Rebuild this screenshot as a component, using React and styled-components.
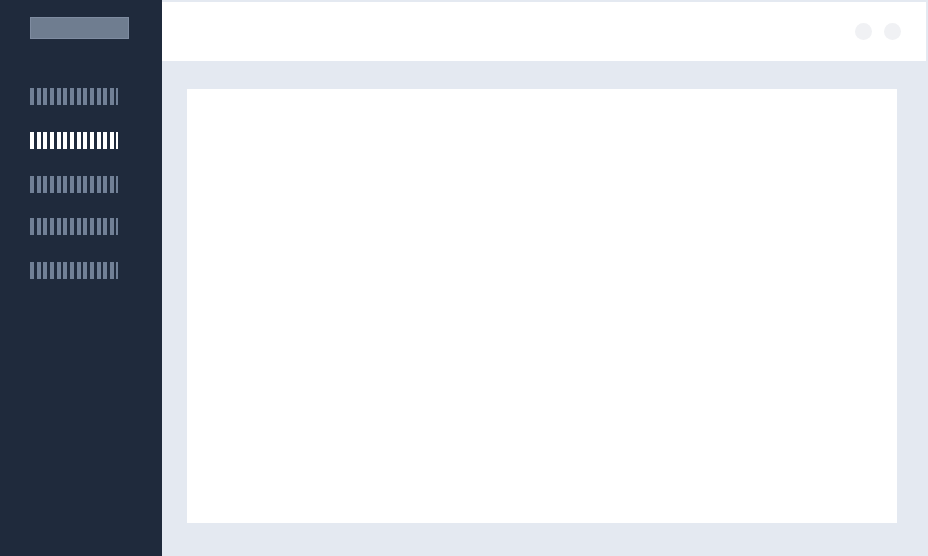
import React from 'react';
import styled, { createGlobalStyle } from 'styled-components';

const GlobalStyle = createGlobalStyle`
  html, body {
    margin: 0;
    padding: 0;
    width: 928px;
    height: 556px;
    overflow: hidden;
    font-family: "Liberation Sans", Arial, sans-serif;
  }
`;

const navItems = [
  { id: 'dashboard', active: false },
  { id: 'projects', active: true },
  { id: 'team', active: false },
  { id: 'reports', active: false },
  { id: 'settings', active: false },
];

const App = () => {
  return (
    <>
      <GlobalStyle />
      <Layout>
        <Sidebar>
          <Logo />
          <Nav>
            {navItems.map((item) => (
              <NavItem key={item.id} $active={item.active} aria-label={item.id} />
            ))}
          </Nav>
        </Sidebar>
        <Main>
          <Header>
            <Avatar />
            <Avatar />
          </Header>
          <Body>
            <Card />
          </Body>
        </Main>
      </Layout>
    </>
  );
};

const Layout = styled.div`
  display: flex;
  width: 928px;
  height: 556px;
`;

const Sidebar = styled.aside`
  width: 162px;
  flex-shrink: 0;
  background-color: #1f2a3c;
  padding: 17px 0 0 30px;
  box-sizing: border-box;
`;

const Logo = styled.div`
  width: 99px;
  height: 22px;
  box-sizing: border-box;
  background-color: #6f7d90;
  border: 1px solid #7f8ca1;
`;

const Nav = styled.nav`
  display: flex;
  flex-direction: column;
  gap: 27px;
  margin-top: 49px;

  & > :nth-child(4) {
    margin-top: -2px;
  }
`;

const NavItem = styled.div`
  width: 88px;
  height: 17px;
  background-image: repeating-linear-gradient(
    90deg,
    ${(p) => (p.$active ? '#ffffff' : '#718096')} 0 4px,
    transparent 4px 6.65px
  );
`;

const Main = styled.main`
  flex: 1;
  display: flex;
  flex-direction: column;
  background-color: #e4e9f1;
  padding: 2px 2px 0 0;
  box-sizing: border-box;
`;

const Header = styled.header`
  height: 59px;
  background-color: #ffffff;
  display: flex;
  align-items: center;
  justify-content: flex-end;
  gap: 12px;
  padding-right: 25px;
  flex-shrink: 0;
`;

const Avatar = styled.div`
  width: 17px;
  height: 17px;
  border-radius: 50%;
  background-color: #f0f1f4;
  margin-top: -1px;
`;

const Body = styled.div`
  flex: 1;
  display: flex;
  padding: 28px 29px 33px 25px;
`;

const Card = styled.section`
  flex: 1;
  background-color: #ffffff;
`;

export default App;
